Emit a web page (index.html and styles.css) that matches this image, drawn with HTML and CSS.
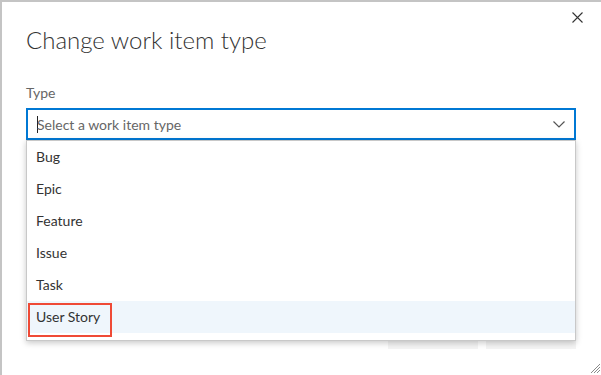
FILE: index.html
```html
<!DOCTYPE html>
<html>
<head>
<meta charset="utf-8">
<link rel="stylesheet" href="styles.css">
</head>
<body>
<div class="dialog">
  <button class="close" aria-label="Close">
    <svg width="11" height="11" viewBox="0 0 11 11"><path d="M0.5 0.5 L10.5 10.5 M10.5 0.5 L0.5 10.5" stroke="#333" stroke-width="1.1" fill="none"/></svg>
  </button>
  <h1 class="title">Change work item type</h1>
  <div class="field">
    <label class="label">Type</label>
    <div class="combo">
      <span class="caret"></span>
      <span class="placeholder">Select a work item type</span>
      <svg class="chev" width="12" height="7" viewBox="0 0 12 7"><path d="M0.5 0.5 L6 6 L11.5 0.5" stroke="#555" stroke-width="1.2" fill="none"/></svg>
    </div>
    <ul class="list">
      <li class="item">Bug</li>
      <li class="item">Epic</li>
      <li class="item">Feature</li>
      <li class="item">Issue</li>
      <li class="item">Task</li>
      <li class="item selected"><span class="mark"></span>User Story</li>
    </ul>
  </div>
  <div class="footer">
    <span class="btn"></span>
    <span class="btn"></span>
  </div>
  <span class="grip">
    <svg width="10" height="10" viewBox="0 0 10 10"><path d="M10 1 L1 10 M10 4 L4 10 M10 7 L7 10" stroke="#8a8a8a" stroke-width="1" fill="none"/></svg>
  </span>
</div>
</body>
</html>
```
FILE: styles.css
```css
html, body {
  margin: 0;
  padding: 0;
  background: #fff;
  overflow: hidden;
}
body {
  font-family: "Lato", "Liberation Sans", sans-serif;
  color: #333;
}
.dialog {
  position: relative;
  box-sizing: border-box;
  width: 601px;
  height: 375px;
  border-top: 2px solid #c4c4c4;
  border-left: 2px solid #c4c4c4;
  padding: 0 24px;
  display: flex;
  flex-direction: column;
}
.close {
  position: absolute;
  top: 10px;
  right: 18px;
  border: 0;
  background: none;
  padding: 0;
  width: 11px;
  height: 11px;
  display: flex;
}
.title {
  margin: 22px 0 0;
  font-size: 24px;
  font-weight: 300;
  line-height: 32px;
  color: #333;
}
.field {
  position: relative;
  margin-top: 27px;
  width: 550px;
}
.label {
  display: block;
  font-size: 14px;
  line-height: 20px;
  color: #666;
  margin-bottom: 5px;
}
.combo {
  box-sizing: border-box;
  height: 32px;
  border: 2px solid #0078d4;
  display: flex;
  align-items: center;
  padding: 0 8px 0 9px;
}
.caret {
  width: 1px;
  height: 17px;
  background: #222;
  margin-right: -1px;
}
.placeholder {
  flex: 1;
  font-size: 14px;
  color: #666;
}
.chev {
  margin-right: 1px;
}
.list {
  position: absolute;
  z-index: 2;
  left: 0;
  top: 57px;
  width: 550px;
  box-sizing: border-box;
  margin: 0;
  padding: 0 0 7px;
  list-style: none;
  background: #fff;
  border: 1px solid #c8c8c8;
  box-shadow: 0 2px 6px rgba(0,0,0,0.22);
}
.item {
  position: relative;
  height: 32px;
  line-height: 32px;
  padding-left: 9px;
  font-size: 14px;
  color: #333;
}
.item.selected {
  background: #eff6fc;
}
.mark {
  position: absolute;
  left: 1px;
  top: 2px;
  width: 80px;
  height: 30px;
  border: 2px solid #ef4a36;
}
.footer {
  margin-top: auto;
  margin-bottom: 26px;
  display: flex;
  justify-content: flex-end;
  gap: 8px;
  width: 550px;
}
.btn {
  width: 90px;
  height: 32px;
  background: #f4f4f4;
}
.grip {
  position: absolute;
  right: 1px;
  bottom: 2px;
  display: flex;
}
```
